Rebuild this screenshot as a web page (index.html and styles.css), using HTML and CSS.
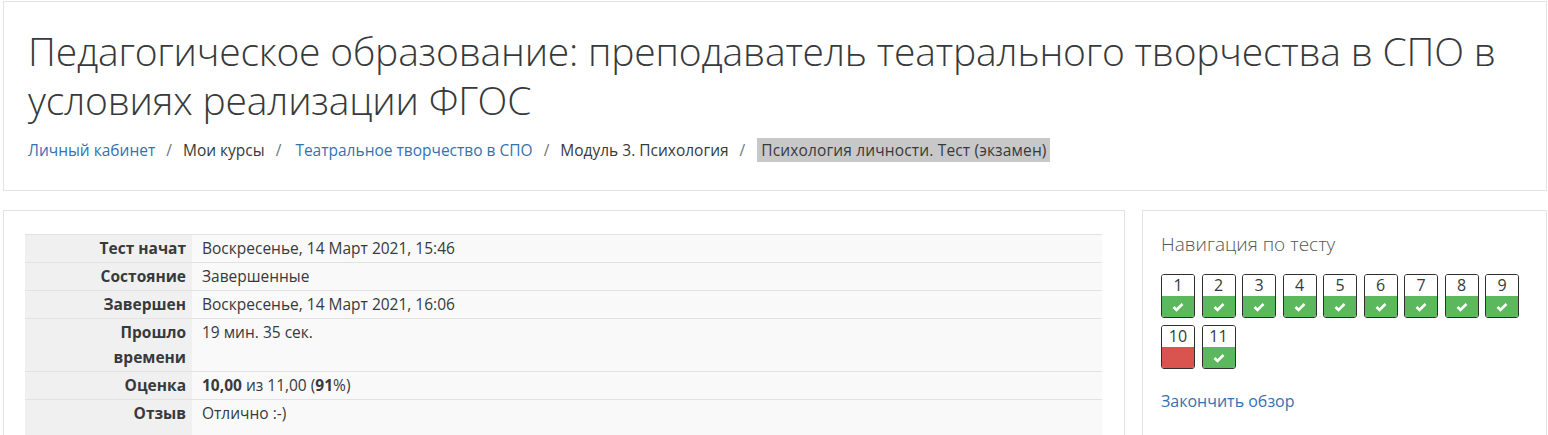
FILE: index.html
```html
<!DOCTYPE html>
<html lang="ru">
<head>
	<meta charset="UTF-8">
	<title>Психология личности. Тест (экзамен)</title>
	<link rel="stylesheet" href="styles.css">
</head>
<body>
	<div class="page">
		<header class="card page-header">
			<h1>Педагогическое образование: преподаватель театрального творчества в СПО в условиях реализации ФГОС</h1>
			<nav class="breadcrumb">
				<a href="#">Личный кабинет</a>
				<span class="sep">/</span>
				<span>Мои курсы</span>
				<span class="sep">/</span>
				<a href="#" class="pad">Театральное творчество в СПО</a>
				<span class="sep">/</span>
				<span>Модуль 3. Психология</span>
				<span class="sep">/</span>
				<span class="current">Психология личности. Тест (экзамен)</span>
			</nav>
		</header>

		<div class="columns">
			<section class="card main">
				<table class="summary">
					<tr><th>Тест начат</th><td>Воскресенье, 14 Март 2021, 15:46</td></tr>
					<tr><th>Состояние</th><td>Завершенные</td></tr>
					<tr><th>Завершен</th><td>Воскресенье, 14 Март 2021, 16:06</td></tr>
					<tr><th>Прошло времени</th><td>19 мин. 35 сек.</td></tr>
					<tr><th>Оценка</th><td><b>10,00</b> из 11,00 (<b>91</b>%)</td></tr>
					<tr class="last"><th>Отзыв</th><td>Отлично :-)</td></tr>
				</table>
			</section>

			<aside class="card quiznav">
				<h3>Навигация по тесту</h3>
				<div class="qn-list">
					<a href="#" class="qn ok"><span class="num">1</span><span class="mark"><svg viewBox="0 0 12 10"><polyline points="1.5,5 4.5,8 10.5,2"/></svg></span></a>
					<a href="#" class="qn ok"><span class="num">2</span><span class="mark"><svg viewBox="0 0 12 10"><polyline points="1.5,5 4.5,8 10.5,2"/></svg></span></a>
					<a href="#" class="qn ok"><span class="num">3</span><span class="mark"><svg viewBox="0 0 12 10"><polyline points="1.5,5 4.5,8 10.5,2"/></svg></span></a>
					<a href="#" class="qn ok"><span class="num">4</span><span class="mark"><svg viewBox="0 0 12 10"><polyline points="1.5,5 4.5,8 10.5,2"/></svg></span></a>
					<a href="#" class="qn ok"><span class="num">5</span><span class="mark"><svg viewBox="0 0 12 10"><polyline points="1.5,5 4.5,8 10.5,2"/></svg></span></a>
					<a href="#" class="qn ok"><span class="num">6</span><span class="mark"><svg viewBox="0 0 12 10"><polyline points="1.5,5 4.5,8 10.5,2"/></svg></span></a>
					<a href="#" class="qn ok"><span class="num">7</span><span class="mark"><svg viewBox="0 0 12 10"><polyline points="1.5,5 4.5,8 10.5,2"/></svg></span></a>
					<a href="#" class="qn ok"><span class="num">8</span><span class="mark"><svg viewBox="0 0 12 10"><polyline points="1.5,5 4.5,8 10.5,2"/></svg></span></a>
					<a href="#" class="qn ok"><span class="num">9</span><span class="mark"><svg viewBox="0 0 12 10"><polyline points="1.5,5 4.5,8 10.5,2"/></svg></span></a>
					<a href="#" class="qn wrong"><span class="num">10</span><span class="mark"></span></a>
					<a href="#" class="qn ok"><span class="num">11</span><span class="mark"><svg viewBox="0 0 12 10"><polyline points="1.5,5 4.5,8 10.5,2"/></svg></span></a>
				</div>
				<a href="#" class="finish">Закончить обзор</a>
			</aside>
		</div>
	</div>
</body>
</html>
```

FILE: styles.css
```css
*{
	margin: 0;
	padding: 0;
	box-sizing: border-box;
}
body{
	background: #fff;
	color: #373a3c;
	font-family: "Open Sans", "Noto Sans", sans-serif;
	font-size: 16px;
}
a{
	color: #3572b0;
	text-decoration: none;
}
.page{
	padding: 1px 1px 0 3px;
}
.card{
	border: 1px solid #e3e3e3;
	background: #fff;
}
.page-header{
	height: 190px;
	padding: 24px 24px 0 24px;
}
.page-header h1{
	font-weight: 300;
	font-size: 39px;
	line-height: 49px;
	letter-spacing: -0.2px;
	color: #373a3c;
}
.breadcrumb{
	display: flex;
	align-items: center;
	margin-top: 14px;
	font-size: 15.5px;
	line-height: 24px;
}
.breadcrumb .sep{
	padding: 0 11px;
	color: #6c757d;
}
.breadcrumb .pad{
	margin-left: 3px;
}
.breadcrumb .current{
	margin-left: 1px;
	padding: 0 3px 0 4px;
	background: #c8c8c8;
	color: #373a3c;
	letter-spacing: 0.15px;
}
.columns{
	display: flex;
	gap: 17px;
	margin-top: 19px;
}
.main{
	flex: 0 0 1122px;
	height: 230px;
	padding: 23px 22px 0 21px;
	overflow: hidden;
}
.summary{
	width: 100%;
	table-layout: fixed;
	border-collapse: collapse;
	font-size: 15.5px;
	line-height: 25px;
}
.summary th,
.summary td{
	border-top: 1px solid #e2e2e2;
	padding: 1px 7px 1px 10px;
	vertical-align: top;
}
.summary th{
	width: 167px;
	padding-left: 40px;
	padding-right: 6px;
	text-align: right;
	font-weight: 700;
	background: #f0f0f0;
}
.summary td{
	background: #f9f9f9;
}
.summary .last th,
.summary .last td{
	height: 40px;
}
.quiznav{
	flex: 1;
	height: 230px;
	padding: 20px 18px 0 18px;
}
.quiznav h3{
	font-weight: 300;
	font-size: 19px;
	line-height: 26px;
	color: #555;
}
.qn-list{
	display: flex;
	flex-wrap: wrap;
	column-gap: 6.5px;
	row-gap: 7px;
	margin-top: 17px;
}
.qn{
	display: flex;
	flex-direction: column;
	width: 34px;
	height: 44px;
	border: 1px solid #2f2f2f;
	border-radius: 3px;
	overflow: hidden;
	color: #373a3c;
}
.qn .num{
	height: 21px;
	text-align: center;
	font-size: 16px;
	line-height: 21px;
	background: #fff;
}
.qn .mark{
	flex: 1;
	display: flex;
	align-items: center;
	justify-content: center;
}
.qn.ok .mark{
	background: #5cb85c;
}
.qn.wrong .mark{
	background: #d9534f;
}
.qn svg{
	width: 12px;
	height: 10px;
	fill: none;
	stroke: #fff;
	stroke-width: 2.6;
}
.finish{
	display: block;
	margin-top: 20px;
	font-size: 16px;
	line-height: 24px;
}
```
